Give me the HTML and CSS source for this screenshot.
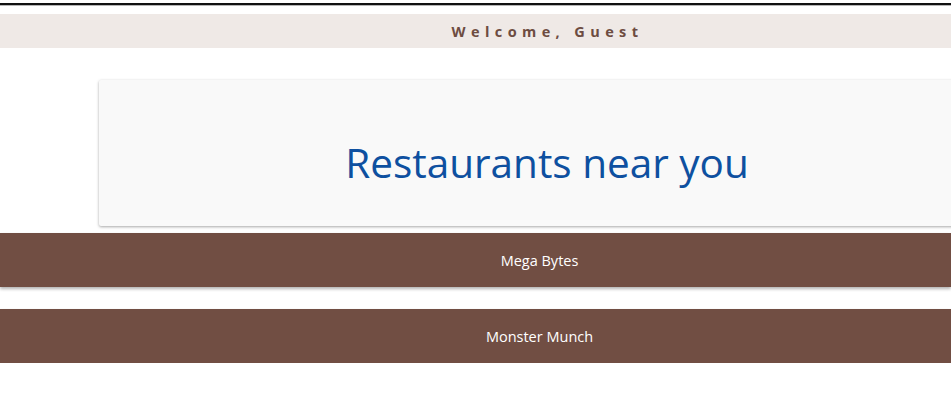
FILE: index.html
```html
<!DOCTYPE html>
<html>
<head>
<meta charset="utf-8">
<link rel="stylesheet" href="styles.css">
</head>
<body>
<div class="rule"></div>
<header class="welcome">Welcome, Guest</header>
<main class="content">
  <section class="card">
    <h1 class="title">Restaurants near you</h1>
  </section>
  <div class="list">
    <div class="item">Mega Bytes</div>
    <div class="item">Monster Munch</div>
  </div>
</main>
</body>
</html>
```

FILE: styles.css
```css
html, body {
  margin: 0;
  padding: 0;
  overflow: hidden;
  background: #ffffff;
  font-family: "Open Sans", "Noto Sans", sans-serif;
}
.rule {
  margin-top: 3px;
  height: 0;
  border-top: 2px solid #111;
  border-bottom: 1px solid #b5b5b5;
}
.welcome {
  margin-top: 8px;
  height: 34px;
  background: #efe9e6;
  color: #6d4c41;
  font-weight: 700;
  font-size: 14.5px;
  letter-spacing: 5.4px;
  display: flex;
  align-items: center;
  justify-content: center;
  padding-left: 144px;
}
.content {
  margin-top: 32px;
}
.card {
  margin-left: 99px;
  margin-right: -20px;
  height: 146px;
  background: #f9f9f9;
  border-radius: 2px;
  box-shadow: 0 1px 3px rgba(0,0,0,0.35);
  display: flex;
  align-items: center;
  justify-content: center;
  padding-left: 24px;
}
.title {
  margin: 0;
  font-weight: 400;
  font-size: 40.5px;
  color: #0e50a0;
  padding-top: 18px;
}
.list {
  margin-top: 7px;
  display: flex;
  flex-direction: column;
  gap: 22px;
}
.item {
  height: 54px;
  background: #714e43;
  color: #ffffff;
  font-size: 14.5px;
  display: flex;
  align-items: center;
  justify-content: center;
  padding-left: 128px;
  box-shadow: 0 2px 3px rgba(0,0,0,0.3);
}
```
